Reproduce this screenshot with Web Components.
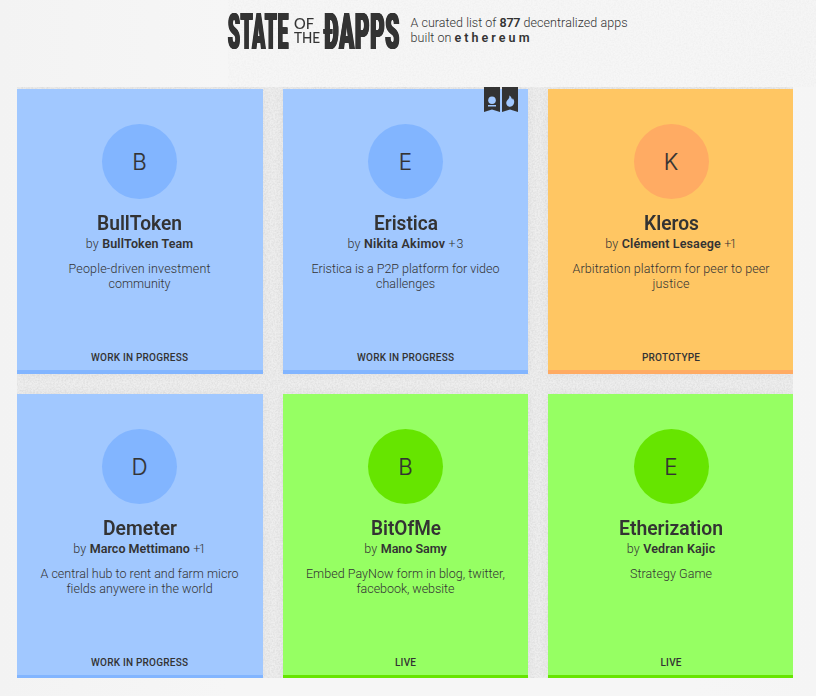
<!DOCTYPE html>
<html lang="en">
<head>
<meta charset="utf-8">
<title>State of the ÐApps</title>
<style>
html,body{margin:0;height:100%}
body{background:#f4f4f4;color:#333;font-family:Roboto,"Liberation Sans",sans-serif;overflow:hidden}
</style>
</head>
<body>
<dapp-page></dapp-page>
<script>
/* One line of text that fills the width given in "w": by tracking, or by narrowing its glyphs with "squeeze". */
class FitLine extends HTMLElement {
  constructor(){
    super();
    this.attachShadow({mode:'open'}).innerHTML = `<style>
      :host{display:inline-block;white-space:nowrap}
      span{display:inline-block;transform-origin:0 50%}
    </style><span><slot></slot></span>`;
  }
  connectedCallback(){
    const s = this.shadowRoot.querySelector('span');
    const w = +this.getAttribute('w'), n = this.textContent.length;
    if(!w || n < 2) return;
    const now = s.getBoundingClientRect().width;
    if(this.hasAttribute('squeeze')){
      this.style.width = w + 'px';
      s.style.transform = `scaleX(${w / now})`;
      return;
    }
    const ls = (w - now) / (n - 1);
    s.style.letterSpacing = ls + 'px';
    s.style.marginRight = -ls + 'px';
  }
}

class PaperGrain extends HTMLElement {
  constructor(){
    super();
    this.attachShadow({mode:'open'}).innerHTML = `<style>
      :host{display:block;pointer-events:none}
      svg{display:block;width:100%;height:100%}
    </style><svg aria-hidden="true"><filter id="n" x="0" y="0" width="100%" height="100%">
      <feTurbulence type="fractalNoise" baseFrequency=".6" numOctaves="2" seed="4"/>
      <feColorMatrix values="0 0 0 0 0  0 0 0 0 0  0 0 0 0 0  .12 0 0 0 -.04"/></filter>
      <rect width="100%" height="100%" filter="url(#n)"/></svg>`;
  }
}

class SiteLogo extends HTMLElement {
  constructor(){
    super();
    this.attachShadow({mode:'open'}).innerHTML = `<style>
      :host{display:flex;width:172px;height:38px;margin-top:1px;color:#333}
      .big{font:900 50px/38px Roboto,sans-serif;height:38px;letter-spacing:2px;text-shadow:1.8px 0 #333,-1.8px 0 #333,.9px 0 #333,-.9px 0 #333}
      .small{display:flex;flex-direction:column;width:27px;margin:4px 4px 0 5px;font:400 15px/13.5px Lato,sans-serif;-webkit-text-stroke:.1px #333}
    </style>
    <fit-line class="big" squeeze w="61">STATE</fit-line>
    <div class="small"><fit-line squeeze w="20">OF</fit-line><fit-line squeeze w="26">THE</fit-line></div>
    <fit-line class="big" squeeze w="76">ÐAPPS</fit-line>`;
  }
}

class SiteHeader extends HTMLElement {
  constructor(){
    super();
    this.attachShadow({mode:'open'}).innerHTML = `<style>
      :host{display:flex;height:75px;padding:12px 0 0 228px;box-sizing:border-box;gap:10.5px}
      .tag{margin:3px 0 0;font-size:12.5px;line-height:15px;font-weight:300}
      .row{display:flex;gap:3px;height:15px}
      b{font-weight:600}
    </style>
    <site-logo></site-logo>
    <div class="tag"><div class="row"><fit-line w="86">A curated list of</fit-line><b><fit-line w="21">877</fit-line></b><fit-line w="104">decentralized apps</fit-line></div>
    <div class="row"><fit-line w="41">built on</fit-line><b><fit-line w="75">ethereum</fit-line></b></div></div>`;
  }
}

class RibbonBadge extends HTMLElement {
  constructor(){
    super();
    const icon = this.getAttribute('icon') === 'fire'
      ? '<path d="M7.2 8.6C9.8 10 9.5 11.8 10.3 12.5C10.7 12 10.7 11.5 10.6 11C12.4 13 12.6 15.3 11.6 17.3C10.4 20.4 5.8 20.5 4.6 17.5C3.6 15 5 13.6 6.2 12.2C7.3 11 7.6 10 7.2 8.6Z"/>'
      : '<circle cx="8" cy="13.3" r="3.8"/><rect x="4" y="18" width="8" height="1.5"/>';
    this.attachShadow({mode:'open'}).innerHTML = `<style>
      :host{display:block;width:16px;height:25px}svg{display:block}
    </style><svg width="16" height="25" fill="#a1c8ff"><path fill="#333" d="M0 0H16V25L8 22.6L0 25Z"/>${icon}</svg>`;
  }
}

class DappCard extends HTMLElement {
  constructor(){
    super();
    this.attachShadow({mode:'open'}).innerHTML = `<style>
      :host{position:relative;display:flex;flex-direction:column;align-items:center;box-sizing:border-box;
        height:285px;padding:35px 0 0;background:var(--bg);border-bottom:4px solid var(--accent);
        box-shadow:0 0 10px rgba(0,0,0,.045)}
      :host(:nth-of-type(3n)){padding-left:1px}
      :host(:nth-of-type(3n+1)){padding-right:1px}
      :host([tone=blue]){--bg:#a1c8ff;--accent:#82b5ff}
      :host([tone=orange]){--bg:#ffc663;--accent:#ffab63}
      :host([tone=green]){--bg:#96ff63;--accent:#66e500}
      .disc{width:75px;height:75px;border-radius:50%;background:var(--accent);display:flex;align-items:center;
        justify-content:center;font:300 22.3px/75px Inter,sans-serif;flex:none}
      .disc span{display:block;-webkit-text-stroke:.2px #333}
      ::slotted([slot=title]){margin-top:12px;height:25px;font-size:21px;line-height:25px;font-weight:600}
      .by{display:flex;gap:3.5px;height:15px;font-size:12.5px;line-height:15px;font-weight:300}
      ::slotted([slot=author]){font-weight:600}
      .desc{margin-top:10px;display:flex;flex-direction:column;align-items:center;font-size:12.5px;line-height:15px;font-weight:300}
      .status{margin-top:auto;margin-bottom:6px;font-size:10px;line-height:12px;font-weight:500}
      .badges{position:absolute;top:-2px;right:10px;display:flex;gap:2px}
    </style>
    <div class="badges"><slot name="badge"></slot></div>
    <div class="disc"><span>${this.getAttribute('letter')}</span></div>
    <slot name="title"></slot>
    <div class="by"><fit-line w="13">by</fit-line><slot name="author"></slot><slot name="more"></slot></div>
    <div class="desc"><slot></slot></div>
    <div class="status"><slot name="status"></slot></div>`;
  }
}

class DappPage extends HTMLElement {
  constructor(){
    super();
    const F = (slot, t, w) => `<fit-line ${slot ? `slot="${slot}"` : ''} ${slot === 'title' ? 'squeeze' : ''} w="${w}">${t}</fit-line>`;
    const card = (tone, letter, title, author, more, desc, status, badges = '') =>
      `<dapp-card tone="${tone}" letter="${letter}">${badges}${F('title', ...title)}${F('author', ...author)}${
        more ? F('more', ...more) : ''}${desc.map(d => F('', ...d)).join('')}${F('status', ...status)}</dapp-card>`;
    const wip = ['WORK IN PROGRESS', 97], live = ['LIVE', 21];
    this.attachShadow({mode:'open'}).innerHTML = `<style>
      :host{display:block;position:relative;height:696px;overflow:hidden;
        background:linear-gradient(90deg,#f3f3f3 0,#f6f6f6 28%,#f6f6f6 85%,#f5f5f5 100%)}
      .top{position:absolute;inset:0 0 auto 228px;height:87px;opacity:.4}
      site-header{position:relative}
      main{position:relative;display:grid;grid-template-columns:246px 245px 245px;gap:20px;width:776px;height:591px;
        margin:12px 0 0 17px;padding-top:2px;box-sizing:border-box;background:#eee;overflow:hidden}
      .grain{position:absolute;inset:0}
    </style>
    <paper-grain class="top"></paper-grain>
    <site-header></site-header>
    <main><paper-grain class="grain"></paper-grain>
    ${card('blue','B',['BullToken',85],['BullToken Team',91],null,[['People-driven investment',142],['community',62]],wip)}
    ${card('blue','E',['Eristica',64],['Nikita Akimov',81],['+3',15],[['Eristica is a P2P platform for video',188],['challenges',59]],wip,
      '<ribbon-badge slot="badge" icon="person"></ribbon-badge><ribbon-badge slot="badge" icon="fire"></ribbon-badge>')}
    ${card('orange','K',['Kleros',55],['Clément Lesaege',99],['+1',12.5],[['Arbitration platform for peer to peer',197],['justice',37]],['PROTOTYPE',58])}
    ${card('blue','D',['Demeter',74],['Marco Mettimano',100],['+1',12.5],[['A central hub to rent and farm micro',198],['fields anywere in the world',146]],wip)}
    ${card('green','B',['BitOfMe',70],['Mano Samy',66],null,[['Embed PayNow form in blog, twitter,',199],['facebook, website',98]],live)}
    ${card('green','E',['Etherization',104],['Vedran Kajic',72],null,[['Strategy Game',82]],live)}
    </main>`;
  }
}
customElements.define('paper-grain', PaperGrain);
customElements.define('site-logo', SiteLogo);
customElements.define('site-header', SiteHeader);
customElements.define('ribbon-badge', RibbonBadge);
customElements.define('dapp-card', DappCard);
customElements.define('dapp-page', DappPage);
customElements.define('fit-line', FitLine);
</script>
</body>
</html>
